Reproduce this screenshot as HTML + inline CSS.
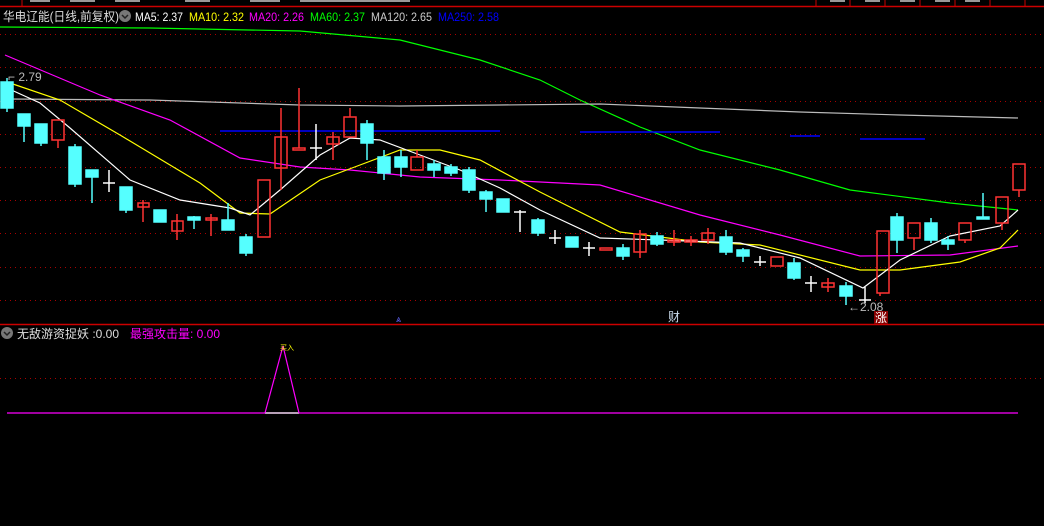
<!DOCTYPE html>
<html><head><meta charset="utf-8"><style>
body{margin:0;background:#000;width:1044px;height:526px;overflow:hidden;font-family:"Liberation Sans","Noto Sans CJK SC",sans-serif}
svg{display:block}
</style></head><body>
<svg width="1044" height="526" xmlns="http://www.w3.org/2000/svg" font-family="Liberation Sans, Noto Sans CJK SC, sans-serif">
<rect width="1044" height="526" fill="#000"/>
<line x1="0" y1="6.5" x2="1044" y2="6.5" stroke="#c00" stroke-width="1.5"/>
<g stroke="#c00"><line x1="22" y1="0" x2="22" y2="6"/><line x1="816" y1="0" x2="816" y2="6"/><line x1="850" y1="0" x2="850" y2="6"/><line x1="885" y1="0" x2="885" y2="6"/><line x1="920" y1="0" x2="920" y2="6"/><line x1="955" y1="0" x2="955" y2="6"/><line x1="990" y1="0" x2="990" y2="6"/><line x1="1025" y1="0" x2="1025" y2="6"/></g>
<g fill="#999"><rect x="30" y="0" width="20" height="2"/><rect x="70" y="0" width="25" height="2"/><rect x="115" y="0" width="25" height="2"/><rect x="185" y="0" width="25" height="2"/><rect x="250" y="0" width="30" height="2"/><rect x="300" y="0" width="110" height="2"/><rect x="830" y="0" width="15" height="2"/><rect x="865" y="0" width="15" height="2"/><rect x="900" y="0" width="15" height="2"/><rect x="935" y="0" width="15" height="2"/><rect x="965" y="0" width="15" height="2"/></g>
<text x="3" y="21" font-size="12.5" fill="#ddd" textLength="116" lengthAdjust="spacingAndGlyphs">华电辽能(日线,前复权)</text>
<circle cx="125" cy="16" r="6" fill="#777"/><path d="M122 15l3 3 3-3" stroke="#222" stroke-width="1.5" fill="none"/>
<g font-size="12"><text x="135" y="21" fill="#fff" textLength="48" lengthAdjust="spacingAndGlyphs">MA5: 2.37</text><text x="189" y="21" fill="#ff0" textLength="55" lengthAdjust="spacingAndGlyphs">MA10: 2.32</text><text x="249" y="21" fill="#f0f" textLength="55" lengthAdjust="spacingAndGlyphs">MA20: 2.26</text><text x="310" y="21" fill="#0f0" textLength="55" lengthAdjust="spacingAndGlyphs">MA60: 2.37</text><text x="371" y="21" fill="#ccc" textLength="61" lengthAdjust="spacingAndGlyphs">MA120: 2.65</text><text x="438" y="21" fill="#00f" textLength="61" lengthAdjust="spacingAndGlyphs">MA250: 2.58</text></g>
<g stroke="#a00" stroke-dasharray="1 4"><line x1="0" y1="34.5" x2="1044" y2="34.5"/><line x1="0" y1="67.5" x2="1044" y2="67.5"/><line x1="0" y1="101.5" x2="1044" y2="101.5"/><line x1="0" y1="134.5" x2="1044" y2="134.5"/><line x1="0" y1="167.5" x2="1044" y2="167.5"/><line x1="0" y1="200.5" x2="1044" y2="200.5"/><line x1="0" y1="233.5" x2="1044" y2="233.5"/><line x1="0" y1="267.5" x2="1044" y2="267.5"/><line x1="0" y1="300.5" x2="1044" y2="300.5"/><line x1="0" y1="378.5" x2="1044" y2="378.5"/></g>
<line x1="0" y1="324.5" x2="1044" y2="324.5" stroke="#c00" stroke-width="1.5"/>
<polyline fill="none" stroke="#0f0" stroke-width="1.2" points="0,27 150,28 300,31 400,40 480,60 540,80 580,100 640,127 700,150 780,170 850,190 950,203 1018,210"/>
<polyline fill="none" stroke="#bbb" stroke-width="1.2" points="7,99 150,100 300,105 400,106 500,105 600,104 700,108 800,112 900,115 1018,118"/>
<g stroke="#00f" stroke-width="1.5"><line x1="220" y1="131" x2="500" y2="131"/><line x1="580" y1="132" x2="720" y2="132"/><line x1="790" y1="136" x2="820" y2="136"/><line x1="860" y1="139" x2="925" y2="139"/></g>
<polyline fill="none" stroke="#f0f" stroke-width="1.2" points="5,55 100,95 170,120 240,158 300,167 350,170 420,177 500,180 600,185 700,215 780,235 860,256 950,255 1018,246"/>
<polyline fill="none" stroke="#ff0" stroke-width="1.2" points="7,82 60,100 120,135 200,183 240,213 270,214 320,180 360,165 400,150 440,150 480,160 540,192 620,232 700,242 760,245 860,270 900,270 960,262 1000,248 1018,230"/>
<polyline fill="none" stroke="#fff" stroke-width="1.2" points="7,88 40,103 70,128 130,180 180,200 230,208 250,215 280,190 320,155 350,138 380,140 420,155 460,170 500,188 540,210 600,238 660,240 740,243 800,258 863,288 900,260 950,236 1000,226 1018,210"/>
<g stroke-width="1.5">
<g stroke="#5ff" fill="#5ff">
<line x1="7" y1="78" x2="7" y2="112"/><rect x="1" y="82" width="12" height="26"/>
<line x1="24" y1="114" x2="24" y2="142"/><rect x="18" y="114" width="12" height="12"/>
<line x1="41" y1="124" x2="41" y2="146"/><rect x="35" y="124" width="12" height="19"/>
<line x1="75" y1="144" x2="75" y2="187"/><rect x="69" y="147" width="12" height="37"/>
<line x1="92" y1="170" x2="92" y2="203"/><rect x="86" y="170" width="12" height="7"/>
<line x1="126" y1="187" x2="126" y2="213"/><rect x="120" y="187" width="12" height="23"/>
<rect x="154" y="210" width="12" height="12"/>
<line x1="194" y1="216" x2="194" y2="229"/><rect x="188" y="217" width="12" height="3"/>
<line x1="228" y1="203" x2="228" y2="230"/><rect x="222" y="220" width="12" height="10"/>
<line x1="246" y1="234" x2="246" y2="256"/><rect x="240" y="237" width="12" height="16"/>
<line x1="367" y1="120" x2="367" y2="160"/><rect x="361" y="124" width="12" height="19"/>
<line x1="384" y1="150" x2="384" y2="180"/><rect x="378" y="157" width="12" height="16"/>
<line x1="401" y1="150" x2="401" y2="177"/><rect x="395" y="157" width="12" height="10"/>
<line x1="434" y1="160" x2="434" y2="177"/><rect x="428" y="164" width="12" height="6"/>
<line x1="451" y1="164" x2="451" y2="176"/><rect x="445" y="167" width="12" height="6"/>
<line x1="469" y1="167" x2="469" y2="193"/><rect x="463" y="170" width="12" height="20"/>
<line x1="486" y1="190" x2="486" y2="212"/><rect x="480" y="192" width="12" height="7"/>
<rect x="497" y="199" width="12" height="13"/>
<line x1="538" y1="218" x2="538" y2="236"/><rect x="532" y="220" width="12" height="13"/>
<rect x="566" y="237" width="12" height="10"/>
<line x1="623" y1="244" x2="623" y2="260"/><rect x="617" y="248" width="12" height="8"/>
<line x1="657" y1="232" x2="657" y2="246"/><rect x="651" y="236" width="12" height="8"/>
<line x1="726" y1="230" x2="726" y2="255"/><rect x="720" y="237" width="12" height="15"/>
<line x1="743" y1="248" x2="743" y2="262"/><rect x="737" y="250" width="12" height="6"/>
<line x1="794" y1="258" x2="794" y2="280"/><rect x="788" y="263" width="12" height="15"/>
<line x1="846" y1="282" x2="846" y2="305"/><rect x="840" y="286" width="12" height="10"/>
<line x1="897" y1="213" x2="897" y2="253"/><rect x="891" y="217" width="12" height="23"/>
<line x1="931" y1="218" x2="931" y2="243"/><rect x="925" y="223" width="12" height="17"/>
<line x1="948" y1="236" x2="948" y2="250"/><rect x="942" y="240" width="12" height="4"/>
<line x1="983" y1="193" x2="983" y2="219"/><rect x="977" y="217" width="12" height="2"/>
</g>
<g stroke="#f33" fill="none">
<line x1="58" y1="140" x2="58" y2="148"/><rect x="52" y="120" width="12" height="20"/>
<line x1="143" y1="200" x2="143" y2="222"/><rect x="138" y="203" width="11" height="4"/>
<line x1="177" y1="214" x2="177" y2="240"/><rect x="172" y="221" width="11" height="10"/>
<line x1="211" y1="214" x2="211" y2="236"/><rect x="206" y="218" width="11" height="2"/>
<rect x="258" y="180" width="12" height="57"/>
<line x1="281" y1="108" x2="281" y2="190"/><rect x="275" y="137" width="12" height="31"/>
<line x1="299" y1="88" x2="299" y2="148"/><rect x="293" y="148" width="12" height="2"/>
<line x1="333" y1="132" x2="333" y2="160"/><rect x="327" y="137" width="12" height="7"/>
<line x1="350" y1="108" x2="350" y2="117"/><rect x="344" y="117" width="12" height="20"/>
<line x1="417" y1="150" x2="417" y2="157"/><rect x="411" y="157" width="12" height="13"/>
<rect x="600" y="248" width="12" height="2"/>
<line x1="640" y1="230" x2="640" y2="258"/><rect x="634" y="234" width="12" height="18"/>
<line x1="674" y1="230" x2="674" y2="246"/><rect x="668" y="240" width="12" height="2"/>
<line x1="691" y1="236" x2="691" y2="246"/><rect x="685" y="240" width="12" height="2"/>
<line x1="708" y1="228" x2="708" y2="244"/><rect x="702" y="233" width="12" height="7"/>
<rect x="771" y="257" width="12" height="9"/>
<line x1="828" y1="278" x2="828" y2="292"/><rect x="822" y="283" width="12" height="4"/>
<line x1="880" y1="293" x2="880" y2="296"/><rect x="877" y="231" width="12" height="62"/>
<line x1="914" y1="238" x2="914" y2="250"/><rect x="908" y="223" width="12" height="15"/>
<line x1="965" y1="240" x2="965" y2="243"/><rect x="959" y="223" width="12" height="17"/>
<line x1="1002" y1="223" x2="1002" y2="230"/><rect x="996" y="197" width="12" height="26"/>
<line x1="1019" y1="190" x2="1019" y2="197"/><rect x="1013" y="164" width="12" height="26"/>
</g>
<g stroke="#fff">
<line x1="109" y1="170" x2="109" y2="192"/><line x1="103" y1="183" x2="115" y2="183"/>
<line x1="316" y1="124" x2="316" y2="160"/><line x1="310" y1="148" x2="322" y2="148"/>
<line x1="520" y1="210" x2="520" y2="232"/><line x1="514" y1="212" x2="526" y2="212"/>
<line x1="555" y1="230" x2="555" y2="244"/><line x1="549" y1="238" x2="561" y2="238"/>
<line x1="589" y1="242" x2="589" y2="256"/><line x1="583" y1="248" x2="595" y2="248"/>
<line x1="760" y1="256" x2="760" y2="266"/><line x1="754" y1="262" x2="766" y2="262"/>
<line x1="811" y1="276" x2="811" y2="292"/><line x1="805" y1="283" x2="817" y2="283"/>
<line x1="865" y1="287" x2="865" y2="303"/><line x1="859" y1="300" x2="871" y2="300"/>
</g>
</g>
<text x="8" y="81" font-size="12" fill="#bbb">⌐ 2.79</text>
<text x="848" y="311" font-size="12" fill="#bbb">←2.08</text>
<text x="396" y="322" font-size="9" fill="#66f">⩓</text>
<text x="668" y="321" font-size="12" fill="#cde">财</text>
<rect x="874" y="311" width="14" height="13" fill="#800"/><text x="875" y="322" font-size="12" fill="#fff">涨</text>
<circle cx="7" cy="333" r="6" fill="#777"/><path d="M4 332l3 3 3-3" stroke="#222" stroke-width="1.5" fill="none"/>
<text x="17" y="338" font-size="12" fill="#ddd">无敌游资捉妖 :0.00</text>
<text x="130" y="338" font-size="12" fill="#f0f">最强攻击量: 0.00</text>
<line x1="7" y1="413" x2="1018" y2="413" stroke="#f0f" stroke-width="1.2"/>
<line x1="265" y1="413" x2="299" y2="413" stroke="#fff" stroke-width="1.2"/>
<polyline points="265,413 283,346 299,413" fill="none" stroke="#f0f" stroke-width="1.2"/>
<text x="280" y="350" font-size="7" fill="#ff0">买入</text>
</svg>
</body></html>
